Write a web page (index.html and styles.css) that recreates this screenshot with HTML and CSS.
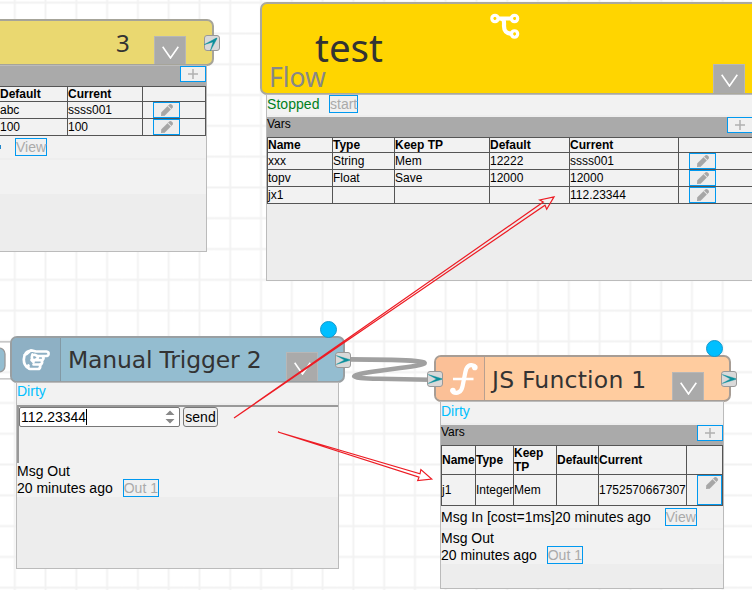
FILE: index.html
```html
<!DOCTYPE html>
<html lang="en">
<head>
<meta charset="utf-8">
<title>Flow editor</title>
<link rel="stylesheet" href="styles.css">
</head>
<body>
<svg class="defs" width="0" height="0" aria-hidden="true">
  <defs>
    <symbol id="pencil" viewBox="0 0 12 12"><path fill="#a6a6a6" stroke="#a6a6a6" stroke-width=".5" d="M0 12 L.5 8.3 L6.5 2.4 L9.6 5.5 L3.7 11.5Z M7.3 1.6 L8.6.4 Q9.6-.3 10.4.6 L11.4 1.6 Q12.3 2.4 11.6 3.4 L10.4 4.7Z"/></symbol>
    <symbol id="plus" viewBox="0 0 10 10"><path d="M5 0V10M0 5H10" stroke="#b0b0b0" stroke-width="1.5"/></symbol>
    <symbol id="chevron" viewBox="0 0 17 13"><path d="M.7 .7 L8.5 12 L16.3 .7" fill="none" stroke="#fff" stroke-width="1.6"/></symbol>
    <symbol id="port" viewBox="0 0 14 10"><path d="M.5 .5 L14 5 L.5 9.5 L6.5 5Z" fill="#d9d9d9"/><path d="M.3 .6 L14 4.7 V5.3 L.3 9.4 L8.5 5Z" fill="#0b8f9c" stroke="#0b8f9c" stroke-width=".4"/></symbol>
  </defs>
</svg>
<main class="canvas">
  <svg class="layer" width="752" height="590">
    <defs><pattern id="grid" x="-.6" y="-12.7" width="30.78" height="30.79" patternUnits="userSpaceOnUse"><path d="M15.4 0V30.79M0 15.4H30.78" stroke="#f2f2f2" stroke-width="1.9"/></pattern></defs>
    <rect width="752" height="590" fill="url(#grid)"/>
    <path d="M0 341.8H13M0 378.8H13" stroke="#bbb" stroke-width="1.3"/>
    <rect x="-20" y="348" width="25" height="24" rx="6" fill="#94bdd0" stroke="#999" stroke-width="1.3"/>
    <path d="M350 359.4 L392 359.9 C432 361 436 363.5 400 368 L378 371 C346 375.5 346 378.3 379 378.8 L430 379.7" fill="none" stroke="#a0a0a0" stroke-width="4.6"/>
  </svg>

  <section class="node node-a">
    <header class="head"><span class="title">3</span><span class="toggle"><svg><use href="#chevron"/></svg></span></header>
    <div class="body">
      <div class="vars"><span></span><button class="add"><svg><use href="#plus"/></svg></button></div>
      <div class="grid">
        <b>Default</b><b>Current</b><b></b>
        <span>abc</span><span>ssss001</span><span><button class="edit"><svg><use href="#pencil"/></svg></button></span>
        <span>100</span><span>100</span><span><button class="edit"><svg><use href="#pencil"/></svg></button></span>
      </div>
      <div class="msg"><i class="dot"></i><button class="tag">View</button></div>
      <div class="blank"></div>
    </div>
    <span class="port"><svg><use href="#port"/></svg></span>
  </section>

  <section class="node node-b">
    <header class="head">
      <div class="names"><span class="title">test</span><span class="kind">Flow</span></div>
      <svg class="flow-icon" viewBox="0 0 30 26"><g fill="none" stroke="#fff"><path d="M5 5.5H24M9 5.5C15 5.5 14 9 14 13C14 19 17 21 24 21" stroke-width="4.2"/><circle cx="5" cy="5.5" r="3.1" stroke-width="3.4"/><circle cx="24.5" cy="5.5" r="3.1" stroke-width="3.4"/><circle cx="24.5" cy="21" r="3.1" stroke-width="3.4"/></g><g fill="#ffd500"><circle cx="5" cy="5.5" r="1.4"/><circle cx="24.5" cy="5.5" r="1.4"/><circle cx="24.5" cy="21" r="1.4"/></g></svg>
      <span class="toggle"><svg><use href="#chevron"/></svg></span>
    </header>
    <div class="body">
      <div class="status"><span class="stopped">Stopped</span><button class="tag">start</button></div>
      <div class="vars"><span>Vars</span><button class="add"><svg><use href="#plus"/></svg></button></div>
      <div class="grid">
        <b>Name</b><b>Type</b><b>Keep TP</b><b>Default</b><b>Current</b><b></b>
        <span>xxx</span><span>String</span><span>Mem</span><span>12222</span><span>ssss001</span><span><button class="edit"><svg><use href="#pencil"/></svg></button></span>
        <span>topv</span><span>Float</span><span>Save</span><span>12000</span><span>12000</span><span><button class="edit"><svg><use href="#pencil"/></svg></button></span>
        <span>jx1</span><span></span><span></span><span></span><span>112.23344</span><span><button class="edit"><svg><use href="#pencil"/></svg></button></span>
      </div>
    </div>
  </section>

  <section class="node node-c">
    <header class="head">
      <span class="icon"><svg class="hand" viewBox="0 0 30 24"><path d="M11 2.5 C6 2.5 2.8 6 2.8 11.5 C2.8 15.5 4.5 18.5 7.5 20.2 M3.5 7 C6 6 8 4 9.5 2.5 M11 2.5 L15 3.5 H25.5 Q28 3.8 27.5 6.3 Q27 8 25 8 H16.5 L13.5 6.8 M11.5 6.5 Q9.5 12 13.5 12.2 Q17 12 17 8 M17 8 H21.5 Q23.5 10 21.5 12.2 H14 M20.5 12.2 Q22 14.5 20 16.5 H12.5 M18.8 16.5 Q20 19 18 21 H9 Q6.5 20.5 7.5 17.5 M10.5 12 L12.5 14" fill="none" stroke="#fff" stroke-width="2.7" stroke-linejoin="round" stroke-linecap="round"/></svg></span>
      <span class="title">Manual Trigger 2</span>
      <span class="toggle"><svg><use href="#chevron"/></svg></span>
    </header>
    <div class="body">
      <div class="status dirty">Dirty</div>
      <div class="panel">
        <div class="number"><span>112.23344</span><i class="caret"></i><svg width="10" height="14" viewBox="0 0 10 14"><path d="M.5 5 L5 .5 L9.5 5Z M.5 9 L5 13.5 L9.5 9Z" fill="#888"/></svg></div>
        <button class="send">send</button>
      </div>
      <div class="out"><div>Msg Out</div><div class="line">20 minutes ago<button class="tag">Out 1</button></div></div>
    </div>
    <i class="badge"></i>
    <span class="port"><svg><use href="#port"/></svg></span>
  </section>

  <section class="node node-d">
    <header class="head">
      <span class="icon"><svg class="func" viewBox="0 0 28 32"><path d="M25 3.2 C20 .5 16.5 3 15.4 9 L12.6 23 C11.4 29.5 7 31 2.5 28.8" fill="none" stroke="#fff" stroke-width="4.2"/><circle cx="24.8" cy="4.4" r="2.8" fill="#fff"/><circle cx="2.9" cy="27.6" r="2.8" fill="#fff"/><path d="M3 16H23.5" stroke="#fff" stroke-width="2.6"/></svg></span>
      <span class="title">JS Function 1</span>
      <span class="toggle"><svg><use href="#chevron"/></svg></span>
    </header>
    <div class="body">
      <div class="status dirty">Dirty</div>
      <div class="vars"><span>Vars</span><button class="add"><svg><use href="#plus"/></svg></button></div>
      <div class="grid">
        <b>Name</b><b>Type</b><b>Keep<br>TP</b><b>Default</b><b>Current</b><b></b>
        <span>j1</span><span>Integer</span><span>Mem</span><span></span><span>1752570667307</span><span><button class="edit tall"><svg><use href="#pencil"/></svg></button></span>
      </div>
      <div class="msg">Msg In [cost=1ms]20 minutes ago<button class="tag">View</button></div>
      <div class="out"><div>Msg Out</div><div class="line">20 minutes ago<button class="tag">Out 1</button></div></div>
    </div>
    <i class="badge"></i>
    <span class="port in"><svg><use href="#port"/></svg></span>
    <span class="port"><svg><use href="#port"/></svg></span>
  </section>

  <svg class="layer" width="752" height="590">
    <g fill="none" stroke="#ed1c24" stroke-width="1.2">
      <path d="M234 418 L543.3 202 L539.7 200 L554 196.8 L546.7 209.2 L545 205.2Z"/>
      <path d="M278 432 L420 473.8 L420.9 469.6 L431.7 479 L417.7 480.5 L419 477.2Z"/>
    </g>
  </svg>
</main>
</body>
</html>
```

FILE: styles.css
```css
* { box-sizing: border-box; }
body { margin: 0; background: #fff; font: 12px/15px "Liberation Sans", Arial, sans-serif; color: #000; }
button { font: inherit; margin: 0; padding: 0; white-space: nowrap; }
b, .grid span { white-space: nowrap; }
.defs { position: absolute; }
.canvas { position: relative; width: 752px; height: 590px; overflow: hidden; }
.layer { position: absolute; left: 0; top: 0; }

.node { position: absolute; }
.node-a { left: -120px; top: 19px; width: 334px; }
.node-b { left: 260px; top: 2px; width: 520px; }
.node-c { left: 10px; top: 336px; width: 335px; }
.node-d { left: 434px; top: 355px; width: 297px; }

.head { display: flex; height: 47px; border: 2px solid #a6a499; border-radius: 7px; overflow: hidden; }
.node-a .head { background: #ead870; justify-content: flex-end; }
.node-b .head { height: 93px; background: #ffd500; border-color: #aba99c; }
.node-c .head { background: #94bdd0; border-color: #999fa2; }
.node-d .head { background: #ffcc9f; border-color: #a79d95; }
.title { font: 24px/44px "DejaVu Sans", Verdana, sans-serif; color: #333; white-space: nowrap; }
.node-a .title { font-family: "Noto Sans", sans-serif; width: 38px; line-height: 44px; }
.node-c .title { padding-left: 7px; width: 224px; font-size: 23.5px; letter-spacing: -.18px; line-height: 45px; }
.node-d .title { padding-left: 7px; width: 187px; font-size: 23.5px; letter-spacing: .2px; line-height: 46px; }
.names { display: flex; flex-direction: column; width: 228px; }
.names .title { font: 38.5px/52px "Noto Sans", sans-serif; padding: 17px 0 0 53px; height: 58px; }
.kind { font: 26.5px/30px "Noto Sans", sans-serif; color: #888; padding-left: 7px; }
.flow-icon { width: 30px; height: 26px; margin-top: 9px; }

.toggle { display: flex; align-items: center; justify-content: center; flex: none; width: 32px; height: 31px; margin-top: 14px; background: #aaa; border: 1px solid #b7b7b7; }
.toggle svg { width: 17px; height: 13px; margin-top: 1px; }
.node-a .toggle { margin: 15px 26px 0 0; }
.node-b .toggle { margin: 60px 0 0 193px; }
.node-c .toggle { margin-left: 1px; }
.node-d .toggle { margin: 15px 0 0 0; }
.icon { flex: none; display: flex; align-items: center; justify-content: center; width: 49px; border-right: 1px solid #8299a5; background: #8eb0c4; }
.node-d .icon { background: #fbc097; border-color: #b8a090; }
.hand { width: 30px; height: 24px; }
.func { width: 28px; height: 32px; margin-left: 7px; }

.body { position: relative; margin: -1px 7px 0 6px; border: 1px solid #bbb; background: #ededed; }
.node-a .body { height: 187px; }
.node-b .body { height: 187px; }
.node-c .body { height: 187px; margin-right: 6px; }
.node-d .body { height: 188px; margin-right: 7px; }
.status { display: flex; height: 22px; font-size: 14px; line-height: 18px; background: #f2f2f2; border-bottom: 2px solid #eee; }
.node-d .status { height: 23px; }
.stopped { color: #008020; width: 62px; letter-spacing: .05px; }
.dirty { color: #00bfff; padding-left: 0; line-height: 17px; }
.node-d .dirty { line-height: 18px; }
.vars { display: flex; justify-content: space-between; height: 20px; background: #aaa; line-height: 14px; }
.add { display: flex; align-items: center; justify-content: center; flex: none; width: 26px; height: 16px; border: 1px solid #0099f0; background: #f0f0f0; }
.node-b .add { margin-right: 19px; }
.add svg { width: 10px; height: 10px; }
.grid { display: grid; gap: 1px; padding: 1px; background: #555; }
.grid > * { background: #f2f2f2; line-height: 16px; display: flex; align-items: center; }
.node-a .grid { grid-template: 14px 16px 16px / 67px 74px 62px; margin: 0 0 0 112px; }
.node-b .grid { grid-template: 14px 16px 16px 16px / 64px 61px 94px 79px 108px 90px; }
.node-d .grid { grid-template: 28px 30px / 33px 37px 42px 41px 87px 35px; }
.node-d .grid > b { line-height: 14px; }
.edit { display: flex; justify-content: center; align-items: center; width: 27px; height: 16px; margin-left: 10px; border: 1px solid #0099f0; background: #eee; }
.edit svg { width: 12px; height: 12px; }
.edit.tall { width: 25px; height: 30px; align-items: flex-start; padding: 1px 0 0 5px; }
.tag { color: #aaa; border: 1px solid #0099f0; background: #f0f0f0; font-size: 14px; line-height: 15px; height: 18px; padding: 0; }
.status .tag { width: 29px; }
.msg { display: flex; align-items: center; height: 24px; font-size: 14px; background: #f2f2f2; border-bottom: 2px solid #eee; white-space: nowrap; }
.msg .tag { margin-left: 14px; width: 32px; }
.dot { width: 2px; height: 4px; margin-left: 112px; background: #2288cc; }
.blank { height: 34px; background: #f2f2f2; }
.panel { display: flex; align-items: flex-start; height: 58px; border: solid #999; border-width: 2px 0 0 2px; background: #f2f2f2; }
.number { display: flex; align-items: center; width: 161px; height: 20px; border: 1px solid #777; border-radius: 2px; background: #fff; padding-left: 1px; font-size: 14px; }
.number svg { margin-left: auto; margin-right: 4px; }
.caret { width: 1px; height: 16px; background: #000; }
.send { height: 20px; width: 35px; margin-left: 3px; border: 1px solid #777; border-radius: 3px; background: #efefef; font-size: 14px; }
.out { background: #f2f2f2; font-size: 14px; line-height: 17px; height: 34px; }
.line { display: flex; }
.out .tag { margin-left: 10px; width: 36px; margin-top: -1px; }

.badge { position: absolute; right: 8px; top: -15px; width: 17px; height: 17px; border-radius: 50%; background: #00bfff; border: 1px solid #1599cd; }
.port { position: absolute; right: -6px; top: 16px; width: 16px; height: 16px; display: flex; align-items: center; justify-content: center; border: 1px solid #999; border-radius: 3px; background: #d9d9d9; }
.port svg { flex: none; width: 14px; height: 10px; }
.port.in { right: auto; left: -7px; }
.node-a .port svg { transform: rotate(-45deg); }
```
